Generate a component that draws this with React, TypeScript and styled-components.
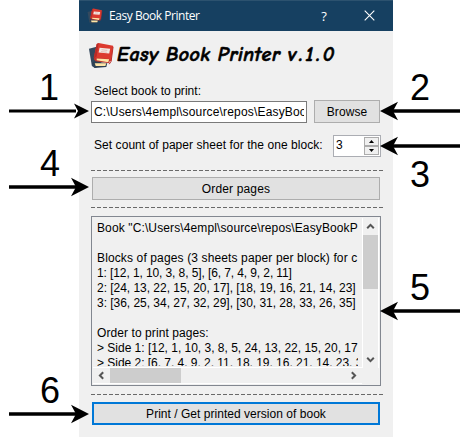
import React from "react";
import styled, { createGlobalStyle } from "styled-components";

const GlobalStyle = createGlobalStyle`
  * { box-sizing: border-box; }
  body { margin: 0; background: #fff; overflow: hidden; }
`;

const Page = styled.main`
  position: relative;
  width: 470px;
  height: 437px;
  padding-left: 79px;
  font: 12px/15px "Liberation Sans", Arial, sans-serif;
  color: #000;
`;

const Window = styled.section`
  display: flex;
  flex-direction: column;
  width: 314px;
  height: 437px;
  background: #f0f0f0;
`;

const TitleBar = styled.header`
  display: flex;
  align-items: center;
  flex: none;
  height: 31px;
  padding: 0 18px 1px 8px;
  background: #164061;
  border-top: 1px solid #2c526f;
  color: #fff;
  font: 12px/16px "Open Sans", "Noto Sans", sans-serif;
`;

const Caption = styled.span`
  flex: 1;
  margin-left: 6px;
  letter-spacing: -0.45px;
  white-space: nowrap;
`;

const Help = styled.span`
  width: 10px;
  margin-right: 35px;
  font-size: 13px;
  text-align: center;
`;

const Heading = styled.div`
  display: flex;
  align-items: center;
  height: 52px;
  padding: 0 0 4px 9px;
`;

const AppName = styled.h1`
  margin: 0 0 0 2px;
  font: italic 700 20px/28px "Comic Sans MS", "Comic Neue", "Open Sans", sans-serif;
  letter-spacing: 0.5px;
  word-spacing: -0.4px;
  -webkit-text-stroke: 0.6px #000;
  white-space: nowrap;
`;

const Version = styled.span`
  letter-spacing: 2.9px;
`;

const Body = styled.div`
  display: flex;
  flex-direction: column;
  padding: 0 10px 0 12px;
`;

const Label = styled.label<{ $spacing?: number }>`
  padding: 1px 0 0 3px;
  white-space: nowrap;
  letter-spacing: ${(p) => p.$spacing ?? 0}px;
`;

const FileRow = styled.div`
  display: flex;
  align-items: center;
  height: 23px;
  margin-top: 1px;
`;

const PathField = styled.div`
  width: 216px;
  height: 22px;
  margin: 1px 7px 0 0;
  padding: 3px 2px;
  background: #fff;
  border: 1px solid #7a7a7a;
`;

const PathText = styled.div<{ $spacing?: number }>`
  overflow: hidden;
  white-space: nowrap;
  letter-spacing: ${(p) => p.$spacing ?? 0}px;
`;

const Button = styled.button<{ $width: number; $focused?: boolean; $spacing?: number }>`
  width: ${(p) => p.$width}px;
  height: 23px;
  padding: 1px 0 0;
  background: #e1e1e1;
  border: ${(p) => (p.$focused ? "2px solid #0078d7" : "1px solid #adadad")};
  color: #000;
  font: inherit;
  letter-spacing: ${(p) => p.$spacing ?? 0}px;
`;

const WideButton = styled(Button)`
  margin-left: 1px;
`;

const CountRow = styled.div`
  display: flex;
  align-items: center;
  height: 22px;
  margin-top: 12px;
`;

const CountLabel = styled(Label)`
  width: 242px;
  padding-bottom: 2px;
`;

const Spinner = styled.div`
  display: flex;
  justify-content: space-between;
  width: 48px;
  height: 22px;
  padding: 1px 1px 1px 2px;
  background: #fff;
  border: 1px solid #abadb3;
  line-height: 17px;
`;

const SpinButtons = styled.div`
  display: grid;
  grid-template-rows: 9px 9px;
  width: 15px;
`;

const SpinButton = styled.div`
  display: grid;
  place-items: center;
  background: #f0f0f0;
  border: 1px solid #acacac;
`;

const Divider = styled.div<{ $top: number; $bottom: number }>`
  width: 292px;
  height: 1px;
  margin: ${(p) => p.$top}px 0 ${(p) => p.$bottom}px;
  background: repeating-linear-gradient(90deg, #696969 0 4px, transparent 4px 6px);
`;

const Output = styled.div`
  display: grid;
  grid-template: 150px 1fr / 270px 1fr;
  width: 290px;
  height: 170px;
  padding: 1px;
  border: 1px solid #828790;
`;

const TextPane = styled.div`
  overflow: hidden;
  padding: 3px 4px 0 4px;
  border: solid #fff;
  border-width: 0 1px 1px 0;
`;

const Lines = styled.div`
  height: 145px;
  overflow: hidden;
  white-space: pre;
`;

const Line = styled.div<{ $spacing: number }>`
  height: 15px;
  letter-spacing: ${(p) => p.$spacing}px;
`;

const VerticalBar = styled.div`
  display: flex;
  flex-direction: column;
  width: 16px;
  height: 150px;
  border-right: 1px solid #fff;
`;

const HorizontalBar = styled.div`
  display: flex;
  width: 269px;
  height: 16px;
  border-bottom: 1px solid #fff;
`;

const ArrowCell = styled.div<{ $w: number; $h: number }>`
  display: grid;
  place-items: center;
  flex: none;
  width: ${(p) => p.$w}px;
  height: ${(p) => p.$h}px;
`;

const Thumb = styled.div<{ $w: number; $h: number }>`
  width: ${(p) => p.$w}px;
  height: ${(p) => p.$h}px;
  background: #cdcdcd;
`;

const Spacer = styled.div`
  flex: 1;
`;

const Pointer = styled.svg<{ $x: number; $y: number }>`
  position: absolute;
  left: ${(p) => p.$x}px;
  top: ${(p) => p.$y}px;
`;

const Digit = styled.span<{ $x: number; $y: number }>`
  position: absolute;
  left: ${(p) => p.$x}px;
  top: ${(p) => p.$y}px;
  width: 24px;
  text-align: center;
  font: 36px/36px "Liberation Sans", Arial, sans-serif;
`;

const BooksIcon = ({ size }: { size: number }) => (
  <svg width={size} height={size} viewBox="0 0 28 28">
    <path d="M1 7 9 5 14 24 7 27 4 25Z" fill="#34495e" />
    <path d="M4 22 7 20 20 22 19 26 7 27Z" fill="#2e4053" />
    <path d="M7 22 19 22 18 25 8 25Z" fill="#ffe5a6" />
    <path d="M9 2 11 1 26 4 26 5 24 20 7 18 6 16Z" fill="#dc3a2f" />
    <path d="M9 2 6 17 9 15 11 1Z" fill="#b92b27" />
    <path d="M7 16 23 18 22 22 8 20 6 18Z" fill="#c0342b" />
    <path d="M9 17 22 18 21 21 9 19Z" fill="#ffe5a6" />
    <path d="M12 6 23 7 22 12 11 11Z" fill="#f1e9e4" />
    <path d="m14 8 6 .7M13.5 10l6 .6" stroke="#e3aaa4" strokeWidth=".8" />
    <path d="M26 5 24 20 22 23" stroke="#b92b27" strokeWidth="1" fill="none" />
  </svg>
);

const Chevron = ({ turn }: { turn: number }) => (
  <svg width="9" height="9" viewBox="0 0 9 9">
    <path d="M1.2 6.2 4.5 2.9 7.8 6.2" fill="none" stroke="#555" strokeWidth="2" transform={`rotate(${turn} 4.5 4.5)`} />
  </svg>
);

const callouts = [
  { n: 1, x: 37, y: 70, arrow: 110.5, left: true, small: true },
  { n: 2, x: 408, y: 70, arrow: 110.5, left: false },
  { n: 3, x: 408, y: 157, arrow: 145.5, left: false },
  { n: 4, x: 38, y: 146, arrow: 186.5, left: true },
  { n: 5, x: 408, y: 270, arrow: 310.5, left: false },
  { n: 6, x: 38, y: 373, arrow: 413.5, left: true },
];

const report: [string, number][] = [
  ['Book "C:\\Users\\4empl\\source\\repos\\EasyBookP', 0.12],
  ["", 0],
  ["Blocks of pages (3 sheets paper per block) for c", 0.13],
  ["1: [12, 1, 10, 3, 8, 5], [6, 7, 4, 9, 2, 11]", -0.1],
  ["2: [24, 13, 22, 15, 20, 17], [18, 19, 16, 21, 14, 23]", -0.03],
  ["3: [36, 25, 34, 27, 32, 29], [30, 31, 28, 33, 26, 35]", -0.03],
  ["", 0],
  ["Order to print pages:", 0.08],
  ["> Side 1: [12, 1, 10, 3, 8, 5, 24, 13, 22, 15, 20, 17,", -0.01],
  ["> Side 2: [6, 7, 4, 9, 2, 11, 18, 19, 16, 21, 14, 23, 3", -0.03],
];

export default function App() {
  return (
    <Page>
      <GlobalStyle />
      <Window>
        <TitleBar>
          <BooksIcon size={16} />
          <Caption>Easy Book Printer</Caption>
          <Help>?</Help>
          <svg width="11" height="11" viewBox="0 0 11 11">
            <path d="m.7.7 9.6 9.6m0-9.6L.7 10.3" stroke="#fff" strokeWidth="1.1" />
          </svg>
        </TitleBar>
        <Heading>
          <BooksIcon size={27} />
          <AppName>Easy Book Printer <Version>v.1.0</Version></AppName>
        </Heading>
        <Body>
          <Label $spacing={0.05}>Select book to print:</Label>
          <FileRow>
            <PathField>
              <PathText $spacing={0.17}>C:\Users\4empl\source\repos\EasyBoo</PathText>
            </PathField>
            <Button $width={66} $spacing={0.1}>Browse</Button>
          </FileRow>
          <CountRow>
            <CountLabel $spacing={0.06}>Set count of paper sheet for the one block:</CountLabel>
            <Spinner>
              3
              <SpinButtons>
                <SpinButton>
                  <svg width="5" height="3"><path d="M0 3 2.5 0 5 3Z" /></svg>
                </SpinButton>
                <SpinButton>
                  <svg width="5" height="3"><path d="M0 0 2.5 3 5 0Z" /></svg>
                </SpinButton>
              </SpinButtons>
            </Spinner>
          </CountRow>
          <Divider $top={13} $bottom={6} />
          <WideButton $width={288} $spacing={0.15}>Order pages</WideButton>
          <Divider $top={7} $bottom={8} />
          <Output>
            <TextPane>
              <Lines>
                {report.map(([text, spacing], i) => (
                  <Line key={i} $spacing={spacing}>{text}</Line>
                ))}
              </Lines>
            </TextPane>
            <VerticalBar>
              <ArrowCell $w={15} $h={17}><Chevron turn={0} /></ArrowCell>
              <Thumb $w={15} $h={54} />
              <Spacer />
              <ArrowCell $w={15} $h={17}><Chevron turn={180} /></ArrowCell>
            </VerticalBar>
            <HorizontalBar>
              <ArrowCell $w={17} $h={15}><Chevron turn={-90} /></ArrowCell>
              <Thumb $w={71} $h={15} />
              <Spacer />
              <ArrowCell $w={17} $h={15}><Chevron turn={90} /></ArrowCell>
            </HorizontalBar>
          </Output>
          <Divider $top={8} $bottom={7} />
          <WideButton $width={288} $focused $spacing={0.03}>Print / Get printed version of book</WideButton>
        </Body>
      </Window>
      {callouts.map((c) => (
        <React.Fragment key={c.n}>
          <Digit $x={c.x} $y={c.y}>{c.n}</Digit>
          <Pointer $x={c.left ? 9 : 380} $y={c.arrow - 10} width="80" height="20" viewBox="0 0 80 20">
            <g transform={c.left ? undefined : "translate(80 0) scale(-1 1)"}>
              <path d="M0 10H67" stroke="#000" strokeWidth={c.small ? 3 : 3.7} />
              <path d={c.small ? "M80 10 65 2.5 69 10 65 17.5Z" : "M80 10 62 .8 67 10 62 19.2Z"} />
            </g>
          </Pointer>
        </React.Fragment>
      ))}
    </Page>
  );
}
